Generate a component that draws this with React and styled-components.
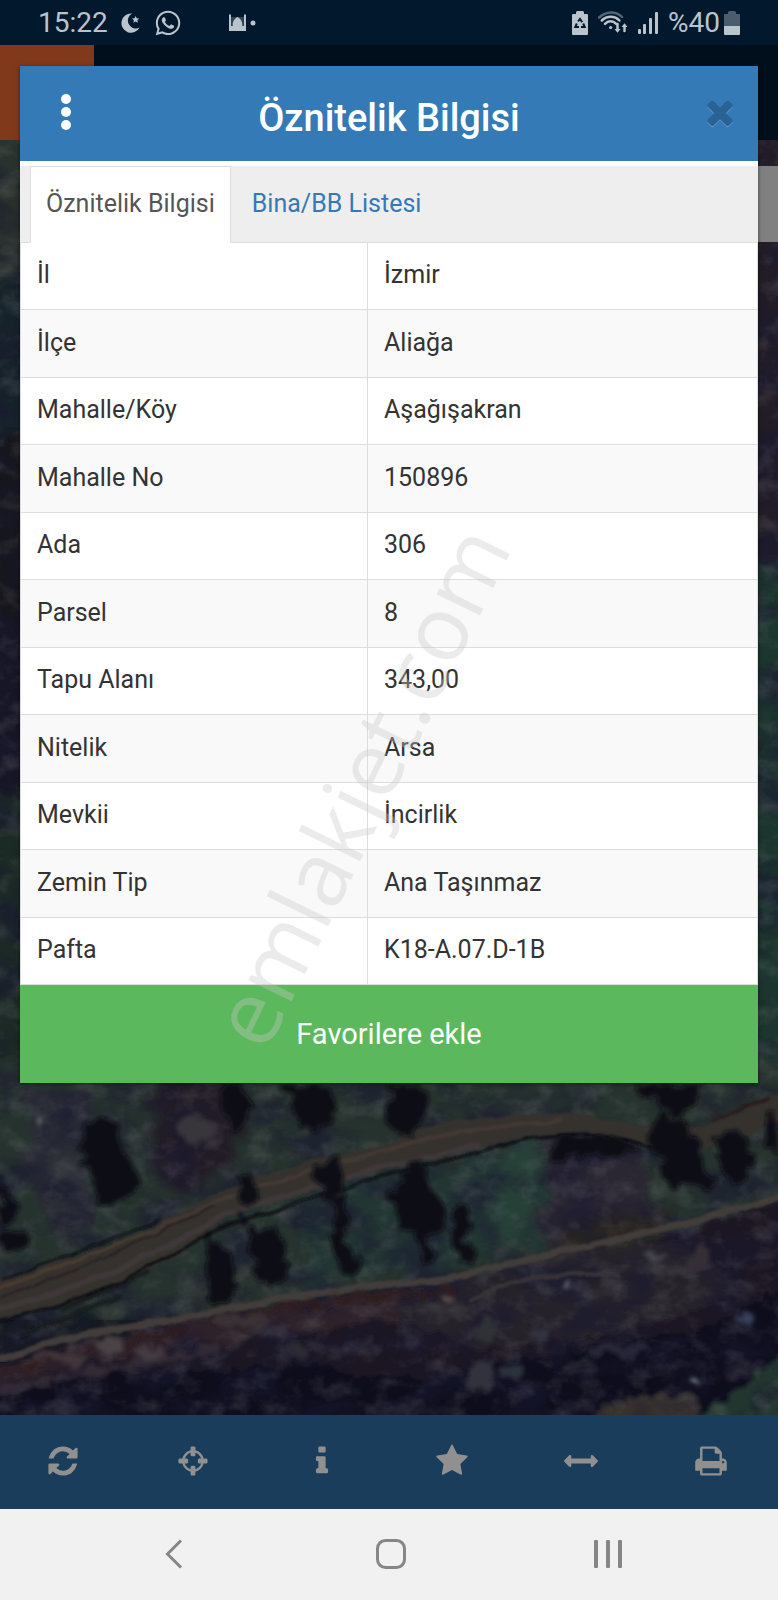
import { useState } from 'react';
import styled, { createGlobalStyle } from 'styled-components';
import { FaWhatsapp } from 'react-icons/fa';

const GlobalStyle = createGlobalStyle`
  * {
    box-sizing: border-box;
  }

  body {
    margin: 0;
    font-family: Roboto, "Liberation Sans", sans-serif;
    color: #333;
  }

  button {
    margin: 0;
    padding: 0;
    border: 0;
    background: none;
    font: inherit;
    color: inherit;
    cursor: pointer;
  }

  svg {
    display: block;
  }
`;

const Screen = styled.div`
  position: relative;
  display: flex;
  flex-direction: column;
  min-height: 100vh;
  overflow: hidden;
`;

const StatusBar = styled.header`
  display: flex;
  align-items: center;
  height: 45px;
  padding: 0 38px;
  background: #02192d;
  color: #b9c4cd;
  font-size: 28px;
  line-height: 44px;
`;

const StatusGroup = styled.div`
  display: flex;
  align-items: center;
  gap: ${(props) => props.$gap};
  margin-left: ${(props) => (props.$end ? 'auto' : '0')};
`;

const Notifications = styled.div`
  display: flex;
  align-items: center;
  gap: 4px;
  margin-left: 47px;
`;

const Charge = styled.div`
  display: flex;
  align-items: center;
  gap: 4px;
`;

const Main = styled.main`
  position: relative;
  flex: 1;
  padding: 21px 20px 0;
  background: #11171b;
`;

const MapBackground = styled.svg`
  position: absolute;
  inset: 0;
  width: 100%;
  height: 100%;
`;

const MapHeader = styled.div`
  position: absolute;
  top: 0;
  left: 0;
  right: 0;
  height: 95px;
  background: #010f1c;
`;

const MapLogo = styled.div`
  width: 94px;
  height: 95px;
  background: #80391a;
`;

const MapPanel = styled.div`
  position: absolute;
  top: 121px;
  right: 0;
  width: 40px;
  height: 76px;
  background: #808080;
`;

const Dialog = styled.section`
  position: relative;
  background: #fff;
  box-shadow: 0 1px 4px rgba(0, 0, 0, 0.5);
`;

const DialogHeader = styled.div`
  display: grid;
  grid-template-columns: 92px 1fr 92px;
  align-items: center;
  height: 95px;
  background: #337ab7;
  color: #fff;
`;

const Title = styled.h1`
  margin: 0;
  padding-top: 8px;
  font-size: 38px;
  font-weight: 500;
  line-height: 44px;
  text-align: center;
  white-space: nowrap;
`;

const HeaderButton = styled.button`
  display: flex;
  align-items: center;
  justify-content: center;
  justify-self: end;
  width: ${(props) => props.$width};
  height: 92px;
  align-self: start;
`;

const Tabs = styled.div`
  display: flex;
  gap: 5px;
  height: 77px;
  margin-top: 5px;
  padding-left: 10px;
  background: #eee;
  border-bottom: 1px solid #ddd;
`;

const Tab = styled.button`
  height: 77px;
  padding: 0 15px 2px;
  border: 1px solid ${(props) => (props.$active ? '#ddd' : 'transparent')};
  border-bottom-color: ${(props) => (props.$active ? '#fff' : 'transparent')};
  background: ${(props) => (props.$active ? '#fff' : 'transparent')};
  color: ${(props) => (props.$active ? '#555' : '#337ab7')};
  font-size: 25px;
  line-height: 32px;
  white-space: nowrap;
`;

const InfoTable = styled.table`
  width: 100%;
  border-collapse: separate;
  border-spacing: 0;
  table-layout: fixed;
  border-left: 1px solid #ddd;
  border-right: 1px solid #ddd;
  font-size: 25px;
  line-height: 32px;
`;

const InfoRow = styled.tr`
  height: 67px;

  &:nth-child(even) {
    height: 68px;
    background: #f9f9f9;
  }

  & > * {
    padding: 0 16px 2px;
    border-bottom: 1px solid #ddd;
    text-align: left;
    font-weight: 400;
  }
`;

const InfoName = styled.th`
  width: 347px;
  border-right: 1px solid #ddd;
`;

const InfoValue = styled.td``;

const FavoriteButton = styled.button`
  display: block;
  width: 100%;
  height: 98px;
  background: #5cb85c;
  color: #fff;
  font-size: 29px;
`;

const Toolbar = styled.nav`
  position: relative;
  display: flex;
  justify-content: space-between;
  height: 94px;
  padding: 0 50px 3px 46px;
  background: #1a3d5c;
  color: #909090;
`;

const ToolButton = styled.button`
  display: flex;
  align-items: center;
  justify-content: center;
`;

const SystemNav = styled.nav`
  display: grid;
  grid-template-columns: repeat(3, 28%);
  justify-content: center;
  height: 91px;
  padding: 0 0 2px 4px;
  background: #f1f1f1;
  color: #868686;
`;

const Watermark = styled.div`
  position: absolute;
  inset: 0;
  display: flex;
  align-items: center;
  justify-content: center;
  color: rgba(200, 200, 200, 0.36);
  font-family: "Open Sans", sans-serif;
  font-size: 90px;
  line-height: 120px;
  pointer-events: none;

  span {
    padding-bottom: 68px;
    transform: rotate(-64deg);
  }
`;

const rows = [
  ['İl', 'İzmir'],
  ['İlçe', 'Aliağa'],
  ['Mahalle/Köy', 'Aşağışakran'],
  ['Mahalle No', '150896'],
  ['Ada', '306'],
  ['Parsel', '8'],
  ['Tapu Alanı', '343,00'],
  ['Nitelik', 'Arsa'],
  ['Mevkii', 'İncirlik'],
  ['Zemin Tip', 'Ana Taşınmaz'],
  ['Pafta', 'K18-A.07.D-1B'],
];

const tools = [
  {
    label: 'Yenile',
    path: 'M1639 1056q0 5-1 7-64 268-268 434.5t-478 166.5q-146 0-282.5-55t-243.5-157l-129 129q-19 19-45 19t-45-19-19-45v-448q0-26 19-45t45-19h448q26 0 45 19t19 45-19 45l-137 137q71 66 161 102t187 36q134 0 250-65t186-179q11-17 53-117 8-23 30-23h192q13 0 22.5 9.5t9.5 22.5zm25-800v448q0 26-19 45t-45 19h-448q-26 0-45-19t-19-45 19-45l138-138q-148-137-349-137-134 0-250 65t-186 179q-11 17-53 117-8 23-30 23h-199q-13 0-22.5-9.5t-9.5-22.5v-7q65-268 270-434.5t480-166.5q146 0 284 55.5t245 156.5l130-129q19-19 45-19t45 19 19 45z',
  },
  {
    label: 'Konum',
    path: 'M1325 1024h-109q-26 0-45-19t-19-45v-128q0-26 19-45t45-19h109q-32-108-112.5-188.5t-188.5-112.5v109q0 26-19 45t-45 19h-128q-26 0-45-19t-19-45v-109q-108 32-188.5 112.5t-112.5 188.5h109q26 0 45 19t19 45v128q0 26-19 45t-45 19h-109q32 108 112.5 188.5t188.5 112.5v-109q0-26 19-45t45-19h128q26 0 45 19t19 45v109q108-32 188.5-112.5t112.5-188.5zm339-192v128q0 26-19 45t-45 19h-143q-37 161-154.5 278.5t-278.5 154.5v143q0 26-19 45t-45 19h-128q-26 0-45-19t-19-45v-143q-161-37-278.5-154.5t-154.5-278.5h-143q-26 0-45-19t-19-45v-128q0-26 19-45t45-19h143q37-161 154.5-278.5t278.5-154.5v-143q0-26 19-45t45-19h128q26 0 45 19t19 45v143q161 37 278.5 154.5t154.5 278.5h143q26 0 45 19t19 45z',
  },
  {
    label: 'Bilgi',
    path: 'M1216 1344v128q0 26-19 45t-45 19h-512q-26 0-45-19t-19-45v-128q0-26 19-45t45-19h64v-384h-64q-26 0-45-19t-19-45v-128q0-26 19-45t45-19h384q26 0 45 19t19 45v576h64q26 0 45 19t19 45zm-128-1152v192q0 26-19 45t-45 19h-256q-26 0-45-19t-19-45v-192q0-26 19-45t45-19h256q26 0 45 19t19 45z',
  },
  {
    label: 'Favoriler',
    path: 'M1728 647q0 22-26 48l-363 354 86 500q1 7 1 20 0 21-10.5 35.5t-30.5 14.5q-19 0-40-12l-449-236-449 236q-22 12-40 12-21 0-31.5-14.5t-10.5-35.5q0-6 2-20l86-500-364-354q-25-27-25-48 0-37 56-46l502-73 225-455q19-41 49-41t49 41l225 455 502 73q56 9 56 46z',
  },
  {
    label: 'Ölçüm',
    path: 'M1792 896q0 26-19 45l-256 256q-19 19-45 19t-45-19-19-45v-128h-1024v128q0 26-19 45t-45 19-45-19l-256-256q-19-19-19-45t19-45l256-256q19-19 45-19t45 19 19 45v128h1024v-128q0-26 19-45t45-19 45 19l256 256q19 19 19 45z',
  },
  {
    label: 'Yazdır',
    path: 'M448 1536h896v-256h-896v256zm0-640h896v-384h-160q-40 0-68-28t-28-68v-160h-640v640zm1152 64q0-26-19-45t-45-19-45 19-19 45 19 45 45 19 45-19 19-45zm128 0v416q0 13-9.5 22.5t-22.5 9.5h-224v160q0 40-28 68t-68 28h-960q-40 0-68-28t-28-68v-160h-224q-13 0-22.5-9.5t-9.5-22.5v-416q0-79 56.5-135.5t135.5-56.5h64v-544q0-40 28-68t68-28h672q40 0 88 20t76 48l152 152q28 28 48 76t20 88v256h64q79 0 135.5 56.5t56.5 135.5z',
  },
];

const timesPath =
  'M1490 1322q0 40-28 68l-136 136q-28 28-68 28t-68-28l-294-294-294 294q-28 28-68 28t-68-28l-136-136q-28-28-28-68t28-68l294-294-294-294q-28-28-28-68t28-68l136-136q28-28 68-28t68 28l294 294 294-294q28-28 68-28t68 28l136 136q28 28 28 68t-28 68l-294 294 294 294q28 28 28 68z';

// dark tree crowns and shadows
const trees = [
  'M96 1118 L84 1135 L80 1160 L92 1180 L94 1200 L106 1206 L122 1202 L142 1188 L130 1160 L120 1135 L108 1120 Z',
  'M236 1178 L250 1176 L260 1188 L258 1200 L250 1206 L238 1200 Z',
  'M236 1206 L252 1226 L248 1230 L240 1218 Z',
  'M202 1234 L222 1238 L232 1258 L236 1284 L228 1304 L214 1304 L204 1284 Z',
  'M248 1232 L266 1228 L284 1236 L290 1262 L280 1284 L268 1286 L256 1268 L246 1250 Z',
  'M316 1162 L334 1158 L348 1176 L346 1190 L332 1196 L324 1188 L312 1178 Z',
  'M326 1192 L342 1198 L350 1220 L346 1240 L362 1266 L352 1274 L336 1262 L330 1240 L336 1222 Z',
  'M276 1084 L320 1084 L336 1100 L334 1116 L318 1134 L300 1126 L290 1104 Z',
  'M224 1086 L244 1084 L252 1108 L240 1132 L228 1130 L222 1106 Z',
  'M388 1084 L420 1084 L430 1116 L410 1134 L388 1132 Z',
  'M404 1160 L422 1160 L428 1182 L442 1200 L446 1226 L428 1240 L436 1258 L424 1266 L416 1236 L398 1226 L392 1196 L400 1182 Z',
  'M456 1204 L472 1208 L466 1240 L478 1256 L460 1262 L450 1232 Z',
  'M646 1124 L664 1112 L690 1130 L700 1150 L704 1166 L720 1180 L704 1192 L684 1182 L672 1188 L660 1166 L652 1142 Z',
  'M716 1142 L732 1128 L746 1142 L752 1160 L746 1182 L732 1184 L722 1162 Z',
  'M762 1118 L778 1110 L778 1156 L766 1146 Z',
  'M634 1084 L700 1084 L694 1106 L676 1116 L652 1098 Z',
  'M0 1180 L12 1196 L20 1212 L10 1222 L0 1226 Z',
  'M0 1232 L26 1230 L28 1244 L14 1252 L0 1244 Z',
  'M558 1136 L600 1136 L640 1148 L624 1158 L596 1150 L576 1158 L556 1166 L550 1156 Z',
];

// lumps of dry ground along the lower ridge
const lights = [
  [110, 1346, 12, 8, '#4a4246'],
  [150, 1354, 16, 5, '#433b41'],
  [64, 1358, 22, 7, '#403638'],
  [300, 1352, 14, 6, '#2b2a33'],
  [40, 1124, 3, 3, '#73787c'],
  [196, 1130, 18, 14, '#39343a'],
  [448, 1300, 8, 5, '#5c4d4c'],
  [486, 1330, 6, 14, '#2d3036'],
  [480, 1378, 14, 16, '#32333c'],
  [512, 1370, 12, 7, '#2b303b'],
  [540, 1336, 8, 6, '#333541'],
  [620, 1350, 30, 6, '#262838'],
  [656, 1256, 10, 5, '#45454d'],
  [746, 1318, 8, 7, '#384058'],
  [693, 1384, 5, 3, '#8f9997'],
  [567, 1285, 3, 3, '#6a6874'],
  [700, 1260, 14, 12, '#352d36'],
  [240, 1320, 30, 6, '#3b3236'],
];

function SatelliteMap() {
  return (
    <MapBackground viewBox="0 45 778 1370" preserveAspectRatio="xMidYMax slice" aria-hidden="true">
      <defs>
        <filter id="ragged" x="0" y="0" width="100%" height="100%">
          <feTurbulence type="fractalNoise" baseFrequency="0.06" numOctaves="3" seed="4" result="n" />
          <feDisplacementMap in="SourceGraphic" in2="n" scale="22" xChannelSelector="R" yChannelSelector="G" />
          <feGaussianBlur stdDeviation="2" />
        </filter>
        <filter id="smooth" x="0" y="0" width="100%" height="100%">
          <feTurbulence type="fractalNoise" baseFrequency="0.03" numOctaves="3" seed="7" result="n" />
          <feDisplacementMap in="SourceGraphic" in2="n" scale="8" xChannelSelector="R" yChannelSelector="G" />
          <feGaussianBlur stdDeviation="1" />
        </filter>
        <filter id="ground" x="0" y="0" width="100%" height="100%">
          <feTurbulence type="fractalNoise" baseFrequency="0.03" numOctaves="4" seed="9" result="n" />
          <feDisplacementMap in="SourceGraphic" in2="n" scale="50" xChannelSelector="R" yChannelSelector="G" />
          <feGaussianBlur stdDeviation="5" />
        </filter>
        <filter id="grain" x="0" y="0" width="100%" height="100%">
          <feTurbulence type="fractalNoise" baseFrequency="0.04 0.05" numOctaves="4" seed="11" />
          <feColorMatrix values="0 0 0 0 0.3  0 0 0 0 0.3  0 0 0 0 0.3  2.4 0 0 0 -1.1" />
        </filter>
        <filter id="shade" x="0" y="0" width="100%" height="100%">
          <feTurbulence type="fractalNoise" baseFrequency="0.02 0.03" numOctaves="5" seed="23" />
          <feColorMatrix values="0 0 0 0 0.01  0 0 0 0 0.01  0 0 0 0 0.03  3.4 0 0 0 -1.4" />
        </filter>
      </defs>
      <rect y="45" width="778" height="1370" fill="#141a1e" />
      <g filter="url(#ground)">
        <rect x="-40" y="110" width="100" height="180" fill="#2b322f" />
        <rect x="-40" y="290" width="100" height="150" fill="#14222b" />
        <rect x="-40" y="440" width="100" height="170" fill="#16151f" />
        <rect x="-40" y="610" width="100" height="180" fill="#141826" />
        <rect x="-40" y="790" width="100" height="300" fill="#1e2a28" />
        <rect x="720" y="110" width="100" height="450" fill="#211d27" />
        <rect x="720" y="560" width="100" height="520" fill="#1d342f" />

        {/* scrub on both sides of the track */}
        <rect x="-40" y="1060" width="880" height="260" fill="#26312f" />
        <path d="M26 1090 L90 1094 L90 1210 L60 1240 L30 1190 Z" fill="#2c2d34" />
        <path d="M150 1070 H240 L236 1160 L200 1186 L150 1170 Z" fill="#241f26" />
        <path d="M300 1200 L470 1150 L540 1160 L540 1250 L310 1290 Z" fill="#233630" />
        <path d="M480 1160 L540 1144 L540 1220 L500 1254 Z" fill="#263f37" />
        <path d="M552 1140 L650 1150 L662 1220 L640 1236 L548 1250 L540 1200 Z" fill="#2b2630" />
        <path d="M560 1226 L640 1206 L690 1216 L640 1240 L550 1256 Z" fill="#2a2623" />
      </g>
      <g filter="url(#ragged)">
        {/* lower slope */}
        <path d="M-20 1362 L140 1332 L280 1302 L390 1286 L500 1276 L640 1242 L800 1196 V1430 H-20 Z" fill="#1d1922" />
        <path d="M-20 1372 L110 1336 L250 1306 L390 1290 L460 1304 L330 1330 L170 1350 L60 1370 L-20 1390 Z" fill="#2e2429" />
        <path d="M400 1290 L520 1266 L640 1240 L700 1250 L740 1290 L640 1330 L480 1350 L400 1320 Z" fill="#27222a" />
        <path d="M-20 1404 L60 1380 L170 1372 L310 1364 L420 1380 L560 1350 L700 1330 L800 1280 V1430 H-20 Z" fill="#0f0e1b" />
        <path d="M600 1408 L640 1396 L680 1394 L700 1406 L690 1430 H590 Z" fill="#38332f" />
        <path d="M700 1416 L752 1380 L800 1340 V1430 H700 Z" fill="#24342d" />
      </g>
      <rect y="45" width="778" height="1370" filter="url(#shade)" opacity="0.55" />
      <rect y="45" width="778" height="1370" filter="url(#grain)" opacity="0.2" />
      <g filter="url(#smooth)" fill="none">
        {/* dirt track */}
        <path d="M-20 1286 C60 1262 100 1250 133 1237 C180 1212 210 1196 237 1184 C280 1168 340 1156 390 1142 C430 1126 450 1120 471 1120 C510 1112 570 1110 645 1126 L700 1128 C730 1118 760 1100 800 1086 V1114 C760 1130 730 1142 700 1150 L645 1146 C600 1134 560 1132 530 1136 C470 1148 430 1160 390 1168 C340 1180 280 1192 237 1212 C200 1240 160 1266 133 1280 C90 1300 50 1310 -20 1322 Z" fill="#35302e" />
        <path d="M-10 1290 C60 1268 120 1244 160 1226" stroke="#4b3c2e" strokeWidth="3" />
        <path d="M150 1232 C220 1196 300 1172 400 1146 C440 1134 500 1124 560 1120" stroke="#433933" strokeWidth="4" />
        <path d="M-10 1312 C80 1290 150 1256 214 1222 C300 1184 400 1164 480 1144" stroke="#3f3839" strokeWidth="6" />
        <path d="M-10 1300 C80 1272 150 1236 214 1206" stroke="#282022" strokeWidth="2" />
        <path d="M-10 1324 C80 1304 150 1270 200 1238 C300 1196 400 1172 530 1138 C580 1130 620 1138 655 1148" stroke="#0a0d13" strokeWidth="3" />
        <path d="M0 1280 C60 1262 100 1244 160 1220" stroke="#0d1012" strokeWidth="2" />
        <path d="M710 1122 L770 1098" stroke="#2c1e1b" strokeWidth="4" />
        <path d="M60 1310 L150 1272 M20 1336 L120 1296" stroke="#141b1e" strokeWidth="3" />

        {/* lower footpath */}
        <path d="M-10 1362 C60 1338 100 1330 170 1322 C210 1310 260 1302 390 1284 C450 1282 500 1266 560 1252 C620 1238 700 1222 800 1192" stroke="#433d3b" strokeWidth="7" />
        <path d="M470 1302 C520 1276 560 1268 620 1276" stroke="#393438" strokeWidth="4" />
      </g>
      <g filter="url(#ragged)">
        <path d="M0 1376 C60 1352 120 1352 190 1326 M250 1314 C300 1306 350 1298 460 1290" fill="none" stroke="#2e1a1c" strokeWidth="5" />
        <path d="M-10 1396 C60 1370 130 1370 220 1348" fill="none" stroke="#312c34" strokeWidth="7" />
        {trees.map((d) => (
          <path key={d} d={d} fill="#0c1119" />
        ))}
        {lights.map(([cx, cy, rx, ry, fill]) => (
          <ellipse key={cx} cx={cx} cy={cy} rx={rx} ry={ry} fill={fill} />
        ))}
      </g>
    </MapBackground>
  );
}

function MoonIcon() {
  return (
    <svg width="20" height="20" viewBox="0 0 20 20" fill="currentColor">
      <path d="M11 .6A9.600 9.600 0 1 0 18.600 14.500 6.500 6.500 0 1 1 11 .6z" />
      <path d="M14.600 3l1.100 2.300 2.500.3-1.900 1.700.6 2.500-2.300-1.300-2.200 1.300.5-2.500-1.900-1.700 2.600-.3z" />
    </svg>
  );
}

function MosqueIcon() {
  return (
    <svg width="17" height="19" viewBox="0 0 17 19" fill="currentColor">
      <path d="M0 18V2l1-1 1 1v11h13V2l1-1 1 1v16z" />
      <path d="M4 14c-1-5 1-8 4.500-10C12 6 14 9 13 14z" />
      <path d="M2 4h13v10H2z" opacity="0.25" />
    </svg>
  );
}

function BatterySaverIcon() {
  return (
    <svg width="16" height="24" viewBox="0 0 16 24">
      <path d="M4 1.500Q4 0 5.500 0h5Q12 0 12 1.500V3h3q1 0 1 1v19q0 1-1 1H1q-1 0-1-1V4q0-1 1-1h3z" fill="#b9c4cd" />
      <g fill="none" stroke="#02192d" strokeWidth="2">
        <path d="M6 10.500L8 8l2.200 3.200" />
        <path d="M4.800 12.500L3.300 16H7" />
        <path d="M11.200 12.500L12.700 16H9" />
      </g>
    </svg>
  );
}

function WifiIcon() {
  return (
    <svg width="30" height="24" viewBox="0 0 30 24" fill="none" stroke="currentColor" strokeWidth="2.500" strokeLinecap="round">
      <path d="M1.200 6.500C8-.2 18-.2 24 6" opacity="0.45" />
      <path d="M3.800 9.500c5-5 13-5 17.600 0" />
      <path d="M7 12.800c3.200-3.400 8-3.400 11.200 0" />
      <circle cx="12.600" cy="16.500" r="1.600" fill="currentColor" stroke="none" />
      <path d="M19.500 13v6" />
      <path d="M26.500 20v-5" />
      <path d="M16.500 18l3 3.800 3-3.800zM23.500 16l3-3.800 3 3.800z" fill="currentColor" stroke="none" />
    </svg>
  );
}

function SignalIcon() {
  return (
    <svg width="20" height="22" viewBox="0 0 20 22" fill="currentColor">
      <rect x="0" y="17" width="3" height="5" rx="1" />
      <rect x="5" y="12" width="3" height="10" rx="1" />
      <rect x="11" y="6" width="3" height="16" rx="1" />
      <rect x="17" y="0" width="3" height="22" rx="1" />
    </svg>
  );
}

function BatteryIcon() {
  return (
    <svg width="16" height="24" viewBox="0 0 16 24" fill="currentColor">
      <path d="M4 1.500Q4 0 5.500 0h5Q12 0 12 1.500V3h3q1 0 1 1v12H0V4q0-1 1-1h3z" opacity="0.4" />
      <path d="M0 15h16v8q0 1-1 1H1q-1 0-1-1z" />
    </svg>
  );
}

function App() {
  const [tab, setTab] = useState(0);

  return (
    <>
      <GlobalStyle />
      <Screen>
        <StatusBar>
          <StatusGroup $gap="13px">
            <span>15:22</span>
            <MoonIcon />
            <FaWhatsapp size={28} />
          </StatusGroup>
          <Notifications>
            <MosqueIcon />
            <svg width="6" height="6" viewBox="0 0 6 6" fill="currentColor">
              <circle cx="3" cy="3" r="2.500" />
            </svg>
          </Notifications>
          <StatusGroup $gap="10px" $end>
            <BatterySaverIcon />
            <WifiIcon />
            <SignalIcon />
            <Charge>
              <span>%40</span>
              <BatteryIcon />
            </Charge>
          </StatusGroup>
        </StatusBar>

        <Main>
          <SatelliteMap />
          <MapHeader>
            <MapLogo />
          </MapHeader>
          <MapPanel />
          <Dialog role="dialog" aria-labelledby="dialog-title">
            <DialogHeader>
              <HeaderButton $width="92px" aria-label="Menü">
                <svg width="10" height="36" viewBox="0 0 10 36" fill="#fff">
                  <circle cx="5" cy="5" r="5" />
                  <circle cx="5" cy="18" r="5" />
                  <circle cx="5" cy="31" r="5" />
                </svg>
              </HeaderButton>
              <Title id="dialog-title">Öznitelik Bilgisi</Title>
              <HeaderButton $width="76px" aria-label="Kapat">
                <svg width="38" height="38" viewBox="0 0 1792 1792">
                  <path d={timesPath} transform="translate(0 56)" fill="#5b95c7" />
                  <path d={timesPath} fill="#296293" />
                </svg>
              </HeaderButton>
            </DialogHeader>
            <Tabs role="tablist">
              <Tab role="tab" aria-selected={tab === 0} $active={tab === 0} onClick={() => setTab(0)}>
                Öznitelik Bilgisi
              </Tab>
              <Tab role="tab" aria-selected={tab === 1} $active={tab === 1} onClick={() => setTab(1)}>
                Bina/BB Listesi
              </Tab>
            </Tabs>
            <InfoTable>
              <tbody>
                {rows.map(([name, value]) => (
                  <InfoRow key={name}>
                    <InfoName scope="row">{name}</InfoName>
                    <InfoValue>{value}</InfoValue>
                  </InfoRow>
                ))}
              </tbody>
            </InfoTable>
            <FavoriteButton>Favorilere ekle</FavoriteButton>
          </Dialog>
        </Main>

        <Toolbar>
          {tools.map((tool) => (
            <ToolButton key={tool.label} aria-label={tool.label}>
              <svg width="34" height="34" viewBox="0 0 1792 1792" fill="currentColor">
                <path d={tool.path} />
              </svg>
            </ToolButton>
          ))}
        </Toolbar>

        <SystemNav>
          <ToolButton aria-label="Geri">
            <svg width="18" height="30" viewBox="0 0 18 30" fill="none" stroke="currentColor" strokeWidth="3">
              <path d="M16 1.500L2.500 15 16 28.500" />
            </svg>
          </ToolButton>
          <ToolButton aria-label="Ana ekran">
            <svg width="30" height="30" viewBox="0 0 30 30" fill="none" stroke="currentColor" strokeWidth="3">
              <rect x="1.500" y="1.500" width="27" height="27" rx="8" />
            </svg>
          </ToolButton>
          <ToolButton aria-label="Son uygulamalar">
            <svg width="28" height="28" viewBox="0 0 28 28" fill="currentColor">
              <rect x="0" width="4" height="28" rx="1" />
              <rect x="12" width="4" height="28" rx="1" />
              <rect x="24" width="4" height="28" rx="1" />
            </svg>
          </ToolButton>
        </SystemNav>

        <Watermark aria-hidden="true">
          <span>emlakjet.com</span>
        </Watermark>
      </Screen>
    </>
  );
}

export default App;
